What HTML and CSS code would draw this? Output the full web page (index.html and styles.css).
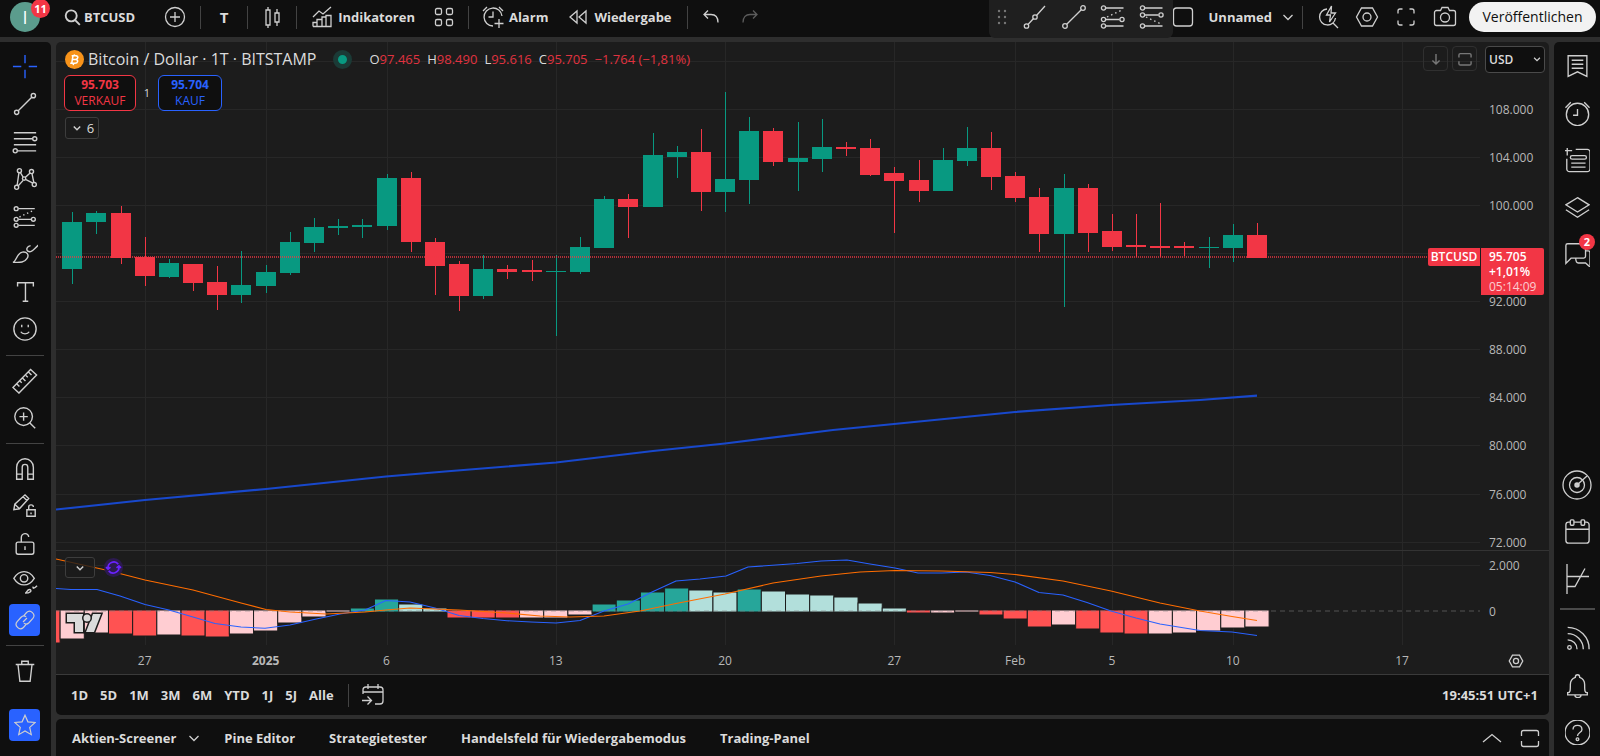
FILE: index.html
```html
<!DOCTYPE html>
<html lang="de">
<head>
<meta charset="utf-8">
<title>BTCUSD</title>
<link rel="stylesheet" href="styles.css">
</head>
<body>
<svg class="sprite" aria-hidden="true">
  <symbol id="search" viewBox="0 0 28 28"><circle cx="13" cy="12.500" r="7"/><path d="M18 18l6 6"/></symbol>
  <symbol id="plus" viewBox="0 0 28 28"><circle cx="14" cy="14" r="9.500"/><path d="M14 9v10M9 14h10"/></symbol>
  <symbol id="candles" viewBox="0 0 28 28"><path d="M8 7h4v15H8zM10 4v3m0 15v3M17 10h4v9h-4zM19 6v4m0 9v4"/></symbol>
  <symbol id="indicators" viewBox="0 0 28 28"><path d="M5 14l6-6 4 3 8-7M5 23.500v-4h4v4m0 0v-7h5v7m0 0V14h4v9.500m0 0v-11h5v11H5"/></symbol>
  <symbol id="grid" viewBox="0 0 28 28"><rect x="5.500" y="5.500" width="6" height="6" rx="1.500"/><rect x="16.500" y="5.500" width="6" height="6" rx="1.500"/><rect x="5.500" y="16.500" width="6" height="6" rx="1.500"/><rect x="16.500" y="16.500" width="6" height="6" rx="1.500"/></symbol>
  <symbol id="alarm-add" viewBox="0 0 28 28"><path d="M23 13a9 9 0 1 0-9 10M14 8.500V14H9.500M4 8l4-4M20 4l4 4M20 16v9M15.500 20.500h9"/></symbol>
  <symbol id="rewind" viewBox="0 0 28 28"><path d="M13 8v12l-7-6zM22 8v12l-7-6z"/></symbol>
  <symbol id="undo" viewBox="0 0 28 28"><path d="M11 7.500l-4 4 4 4M7 11.500h7c4 0 7 2.500 7 8"/></symbol>
  <symbol id="redo" viewBox="0 0 28 28"><path d="M17 7.500l4 4-4 4M21 11.500h-7c-4 0-7 2.500-7 8"/></symbol>
  <symbol id="drag" viewBox="0 0 28 28"><g class="solid"><circle cx="11" cy="8" r="1.200"/><circle cx="17" cy="8" r="1.200"/><circle cx="11" cy="14" r="1.200"/><circle cx="17" cy="14" r="1.200"/><circle cx="11" cy="20" r="1.200"/><circle cx="17" cy="20" r="1.200"/></g></symbol>
  <symbol id="ray" viewBox="0 0 28 28"><circle cx="5.500" cy="23" r="2.200"/><circle cx="14" cy="14" r="2.200"/><path d="M7 21.500l5.500-6M15.500 12.500L24 3"/></symbol>
  <symbol id="trend" viewBox="0 0 28 28"><circle cx="5" cy="23" r="2.300"/><circle cx="23" cy="5" r="2.300"/><path d="M6.700 21.300L21.300 6.700"/></symbol>
  <symbol id="fib" viewBox="0 0 28 28"><circle cx="4.500" cy="5" r="2.100"/><circle cx="4.500" cy="16.500" r="2.100"/><circle cx="23" cy="16.500" r="2.100"/><circle cx="4.500" cy="23" r="2.100"/><path d="M7 5h17.500M7 16.500h13.500M7 23h17.500"/><path d="M8 14l15-7" stroke-dasharray="1.500 3"/></symbol>
  <symbol id="fib-ext" viewBox="0 0 28 28"><circle cx="4.500" cy="5" r="2.100"/><circle cx="4.500" cy="12" r="2.100"/><circle cx="23" cy="12" r="2.100"/><circle cx="4.500" cy="23" r="2.100"/><path d="M7 5h17.500M7 12h13.500M7 23h17.500"/><path d="M8 14l15 7" stroke-dasharray="1.500 3"/></symbol>
  <symbol id="square" viewBox="0 0 28 28"><rect x="4.500" y="5" width="19" height="18" rx="3"/></symbol>
  <symbol id="chev" viewBox="0 0 28 28"><path d="M9.500 12l4.500 4.500 4.500-4.500"/></symbol>
  <symbol id="chev-up" viewBox="0 0 28 28"><path d="M5 18l9-7.500 9 7.500"/></symbol>
  <symbol id="quick" viewBox="0 0 28 28"><path d="M13 6a8 8 0 1 0 8.500 9M19 20l5 5M17.500 3l-5 9h4l-1 7 6-9h-4.500z"/></symbol>
  <symbol id="hex" viewBox="0 0 28 28"><path d="M8.500 5h11l5 9-5 9h-11l-5-9z"/><circle cx="14" cy="14" r="4"/></symbol>
  <symbol id="full" viewBox="0 0 28 28"><path d="M6 10.500V8a2 2 0 0 1 2-2h2.500M17.500 6H20a2 2 0 0 1 2 2v2.500M22 17.500V20a2 2 0 0 1-2 2h-2.500M10.500 22H8a2 2 0 0 1-2-2v-2.500"/></symbol>
  <symbol id="camera" viewBox="0 0 28 28"><path d="M3.500 9.500a2 2 0 0 1 2-2h4l1.500-3h6l1.500 3h4a2 2 0 0 1 2 2v11a2 2 0 0 1-2 2h-17a2 2 0 0 1-2-2z"/><circle cx="14" cy="14.500" r="4.500"/></symbol>
  <symbol id="cross" viewBox="0 0 28 28"><path d="M14 1v9M14 17v9M1 13.500h9M18 13.500h9"/></symbol>
  <symbol id="hlines" viewBox="0 0 28 28"><path d="M2 4h24M2 10.500h20M2 17h24M6 23.500h20"/><circle cx="24.500" cy="10.500" r="2.200"/><circle cx="3.500" cy="23.500" r="2.200"/></symbol>
  <symbol id="pattern" viewBox="0 0 28 28"><circle cx="8" cy="5" r="2.200"/><circle cx="21" cy="6" r="2.200"/><circle cx="5" cy="23" r="2.200"/><circle cx="24" cy="20" r="2.200"/><circle cx="13" cy="13.500" r="1.800"/><path d="M7.500 7L5.500 21M9 7l3 5M14.500 12l5-4.500M21.500 8l2 10M6.500 21.500l5.500-6M14.500 14.500l8 4"/></symbol>
  <symbol id="brush" viewBox="0 0 28 28"><path d="M1 23c4-1 4-10 10-11 5-1 8 3 5 7-3 5-9 4-15 4zM20 5c-4 1-5 4-3 6 4 2 5-1 12-7"/></symbol>
  <symbol id="text" viewBox="0 0 28 28"><path d="M6 8V4h17v4M14.500 4v20M11.500 24h6"/></symbol>
  <symbol id="smile" viewBox="0 0 28 28"><circle cx="14" cy="14" r="12"/><path d="M9.500 17c1.500 3 7.500 3 9 0M10.500 9.500v2.500M17.500 9.500v2.500"/></symbol>
  <symbol id="ruler" viewBox="0 0 28 28"><path d="M1 21L20 1.500l6.500 6L7.500 27zM5 17l3 3M8.500 14l2 2M11.500 11l3 3M15 8l2 2M18 4.500l3 3"/></symbol>
  <symbol id="zoom" viewBox="0 0 28 28"><circle cx="12.500" cy="12.500" r="9.500"/><path d="M19 19l6 6M12.500 8v9M8 12.500h9"/></symbol>
  <symbol id="magnet" viewBox="0 0 28 28"><path d="M5 25V12a9 9 0 0 1 18 0v13h-6V12a3 3 0 0 0-6 0v13zM5 19.500h6M17 19.500h6"/></symbol>
  <symbol id="pencil-lock" viewBox="0 0 28 28"><path d="M2 18l1-6L14 2l4 4L8 17zM3 12l5 5M12 4l4 4M16 18h9v7h-9zM18 18v-3c0-3 5-3 5 0M20.500 21v2"/></symbol>
  <symbol id="lock" viewBox="0 0 28 28"><rect x="4.500" y="12" width="19" height="13" rx="2"/><path d="M10 12V7.500c0-6 8-6 8-1M14 16.500v4"/></symbol>
  <symbol id="eye" viewBox="0 0 28 28"><path d="M2 10c6-9.500 16-9.500 22 0-6 9.500-16 9.500-22 0z"/><circle cx="13" cy="10" r="4"/><path d="M14 26c2 0 2-4 5-4 3 1 1 4-5 4zM23 19c-1 2 0 3 4-1"/></symbol>
  <symbol id="link" viewBox="0 0 28 28"><path d="M12 9l4-4.500a5.500 5.500 0 0 1 8 7.500L19 17.500a5 5 0 0 1-6.500.500M16 19l-4 4.500a5.500 5.500 0 0 1-8-7.500L9 10.500a5 5 0 0 1 6.500-.500M11.500 16.500l5-5"/></symbol>
  <symbol id="trash" viewBox="0 0 28 28"><path d="M4 7h20M6.500 7.500l2 17.500h11l2-17.500M10.500 7V3.500h7V7"/></symbol>
  <symbol id="star" viewBox="0 0 28 28"><path d="M14 1.500l3.700 8.500 9.300.800-7 6.200 2 9.300-8-4.800-8 4.800 2-9.300-7-6.200 9.300-.800z"/></symbol>
  <symbol id="bookmark" viewBox="0 0 28 28"><path d="M3.500 2h21v23L14 20 3.500 25zM7.500 7h13M7.500 11.500h13M7.500 16h13"/></symbol>
  <symbol id="alarm" viewBox="0 0 28 28"><circle cx="14" cy="15" r="12.500"/><path d="M14 9v7H9M.500 7.500l6-6M21.500 1.500l6 6"/></symbol>
  <symbol id="list-add" viewBox="0 0 28 28"><path d="M12 1.500h13a3 3 0 0 1 3 3v19a3 3 0 0 1-3 3H5a3 3 0 0 1-3-3V12M2.500-2.500v11M-3 3h11M7 17h16M7 21.500h16"/><rect x="6" y="8.500" width="18" height="4" rx="2"/></symbol>
  <symbol id="layers" viewBox="0 0 28 28"><path d="M14 3l13 8-13 8-13-8zM1 16.500L14 25l13-8.500"/></symbol>
  <symbol id="chat" viewBox="0 0 28 28"><path d="M7 18l-6 6V4a2 2 0 0 1 2-2h18a2 2 0 0 1 2 2v12a2 2 0 0 1-2 2zM23 10h3a2 2 0 0 1 2 2v16l-5-4.500h-8c-2 0-3-1-3-5.500"/></symbol>
  <symbol id="target" viewBox="-1 -1 30 30"><circle cx="14" cy="14" r="14"/><circle cx="14" cy="14" r="7.500"/><circle cx="14" cy="14" r="1.500" stroke-width="2.500"/><path d="M14 14L24 5"/></symbol>
  <symbol id="calendar" viewBox="0 0 28 28"><path d="M6 3.500H4a3 3 0 0 0-3 3V24a3 3 0 0 0 3 3h20a3 3 0 0 0 3-3V6.500a3 3 0 0 0-3-3h-2M10 3.500h8M1 11.500h26"/><rect x="6" y="1" width="4" height="6" rx="1"/><rect x="18" y="1" width="4" height="6" rx="1"/></symbol>
  <symbol id="options" viewBox="0 0 30 30"><path d="M5 0v30M5 12.500h22M5 22.500h8l10-18"/></symbol>
  <symbol id="rss" viewBox="0 0 28 28"><path d="M3 1.500a24 24 0 0 1 24 24.500M3 8.500a17.500 17.500 0 0 1 17.500 17.500M3 15.500a10.500 10.500 0 0 1 10.500 10.500"/><circle cx="5" cy="24" r="2"/></symbol>
  <symbol id="bell" viewBox="0 0 28 28"><path d="M3 22c3 0 3-2 3-9 0-5 3-7 5.500-8 0-4 5-4 5 0C19 6 22 8 22 13c0 7 0 9 3 9v2.500H3zM11 24.500c0 4 7 4 7 0"/></symbol>
  <symbol id="help" viewBox="0 0 28 28"><circle cx="14" cy="14" r="14"/><path d="M9 10.500c0-6 10-6 10 0 0 4-5 3-5 7.500"/><circle cx="14" cy="21.500" r="1.500"/></symbol>
  <symbol id="goto" viewBox="0 0 28 28"><path d="M4 13V9a3 3 0 0 1 3-3h14a3 3 0 0 1 3 3v11a3 3 0 0 1-3 3h-5M4 11h20M9 3v5M19 3v5M3 19.500h9M8.500 15.500l4 4-4 4"/></symbol>
  <symbol id="panel" viewBox="0 0 28 28"><path d="M5.500 12V8.500a2 2 0 0 1 2-2h13a2 2 0 0 1 2 2V12M5.500 17v3.500a2 2 0 0 0 2 2h13a2 2 0 0 0 2-2V17"/></symbol>
  <symbol id="down" viewBox="0 0 28 28"><path d="M14 7v14M9 16l5 5 5-5"/></symbol>
  <symbol id="refresh" viewBox="0 0 28 28"><path d="M6 15.500a8.500 8.500 0 0 1 15-6.500M22 12.500a8.500 8.500 0 0 1-15 6.500M3 13.500l3 3 3.500-3M25 14.500l-3-3-3.500 3"/></symbol>
</svg>

<header class="topbar">
  <button class="avatar" aria-label="Profil">I<span class="badge">11</span></button>
  <button class="tb symbol-search"><svg class="ic ic-s bold"><use href="#search"/></svg>BTCUSD</button>
  <button class="tb tb-add" aria-label="Vergleichen"><svg class="ic"><use href="#plus"/></svg></button>
  <i class="vr"></i>
  <button class="tb tb-46 tb-interval">T</button>
  <i class="vr"></i>
  <button class="tb tb-48" aria-label="Kerzen"><svg class="ic"><use href="#candles"/></svg></button>
  <i class="vr"></i>
  <button class="tb tb-ind"><svg class="ic"><use href="#indicators"/></svg>Indikatoren</button>
  <button class="tb tb-grid" aria-label="Vorlagen"><svg class="ic"><use href="#grid"/></svg></button>
  <i class="vr"></i>
  <button class="tb tb-alarm"><svg class="ic"><use href="#alarm-add"/></svg>Alarm</button>
  <button class="tb tb-replay"><svg class="ic"><use href="#rewind"/></svg>Wiedergabe</button>
  <i class="vr"></i>
  <button class="tb tb-46" aria-label="Rückgängig"><svg class="ic"><use href="#undo"/></svg></button>
  <button class="tb tb-30 dim" aria-label="Wiederholen"><svg class="ic"><use href="#redo"/></svg></button>
  <div class="topbar-right">
    <button class="tb tb-30" aria-label="Layout"><svg class="ic"><use href="#square"/></svg></button>
    <button class="tb tb-name">Unnamed<svg class="ic"><use href="#chev"/></svg></button>
    <i class="vr"></i>
    <button class="tb tb-icon" aria-label="Schnellsuche"><svg class="ic"><use href="#quick"/></svg></button>
    <button class="tb tb-icon" aria-label="Einstellungen"><svg class="ic"><use href="#hex"/></svg></button>
    <button class="tb tb-icon" aria-label="Vollbild"><svg class="ic"><use href="#full"/></svg></button>
    <button class="tb tb-icon" aria-label="Schnappschuss"><svg class="ic"><use href="#camera"/></svg></button>
    <button class="publish">Veröffentlichen</button>
  </div>
  <div class="floating">
    <button class="fl fl-drag" aria-label="Verschieben"><svg class="ic"><use href="#drag"/></svg></button>
    <button class="fl" aria-label="Strahl"><svg class="ic"><use href="#ray"/></svg></button>
    <button class="fl" aria-label="Trendlinie"><svg class="ic"><use href="#trend"/></svg></button>
    <button class="fl" aria-label="Fibonacci"><svg class="ic"><use href="#fib"/></svg></button>
    <button class="fl" aria-label="Fibonacci-Erweiterung"><svg class="ic"><use href="#fib-ext"/></svg></button>
  </div>
</header>

<div class="workspace">
  <nav class="tools">
    <div class="tool-group tool-group-draw">
      <button class="tool accent" aria-label="Fadenkreuz"><svg class="ic"><use href="#cross"/></svg></button>
      <button class="tool" aria-label="Trendlinie"><svg class="ic"><use href="#trend"/></svg></button>
      <button class="tool" aria-label="Linien"><svg class="ic"><use href="#hlines"/></svg></button>
      <button class="tool" aria-label="Muster"><svg class="ic"><use href="#pattern"/></svg></button>
      <button class="tool" aria-label="Prognose"><svg class="ic"><use href="#fib"/></svg></button>
      <button class="tool" aria-label="Pinsel"><svg class="ic"><use href="#brush"/></svg></button>
      <button class="tool" aria-label="Text"><svg class="ic"><use href="#text"/></svg></button>
      <button class="tool" aria-label="Symbole"><svg class="ic"><use href="#smile"/></svg></button>
    </div>
    <hr>
    <div class="tool-group">
      <button class="tool" aria-label="Messen"><svg class="ic"><use href="#ruler"/></svg></button>
      <button class="tool" aria-label="Vergrößern"><svg class="ic"><use href="#zoom"/></svg></button>
    </div>
    <hr>
    <div class="tool-group tool-group-edit">
      <button class="tool" aria-label="Magnet"><svg class="ic"><use href="#magnet"/></svg></button>
      <button class="tool" aria-label="Zeichenmodus"><svg class="ic"><use href="#pencil-lock"/></svg></button>
      <button class="tool" aria-label="Sperren"><svg class="ic"><use href="#lock"/></svg></button>
      <button class="tool" aria-label="Ausblenden"><svg class="ic"><use href="#eye"/></svg></button>
      <button class="tool active" aria-label="Verknüpfen"><svg class="ic"><use href="#link"/></svg></button>
    </div>
    <hr>
    <button class="tool" aria-label="Löschen"><svg class="ic"><use href="#trash"/></svg></button>
    <button class="tool active tool-last" aria-label="Favoriten"><svg class="ic"><use href="#star"/></svg></button>
  </nav>

  <main class="center">
    <section class="chart-card">
      <div class="chart">
        <svg class="plot" id="plot" role="img" aria-label="BTCUSD Kerzendiagramm"></svg>
        <div class="legend">
          <div class="legend-title">
            <svg class="coin" viewBox="0 0 20 20"><circle cx="10" cy="10" r="10" fill="#f7931a"/><path d="M8.500 5.500L7 14.500M7 6h4.500c3 .500 2.500 3.500-.500 4M7 10h4.500c3 .500 2 4-1 4H5.500M10 4.500l-.300 1.500M9 14l-.300 1.800" fill="none" stroke="#fff" stroke-width="1.600"/></svg>
            <h1>Bitcoin / Dollar · 1T · BITSTAMP</h1>
            <i class="status"></i>
            <p class="ohlc"><span>O<b>97.465</b></span><span>H<b>98.490</b></span><span>L<b>95.616</b></span><span>C<b>95.705</b></span><b>−1.764 (−1,81%)</b></p>
          </div>
          <div class="trade">
            <button class="quote sell"><strong>95.703</strong>VERKAUF</button>
            <span class="spread">1</span>
            <button class="quote buy"><strong>95.704</strong>KAUF</button>
          </div>
          <button class="collapse"><svg class="ic ic-c"><use href="#chev"/></svg>6</button>
        </div>
        <div class="axis-tools">
          <button class="mini" aria-label="Nach unten"><svg class="ic ic-c"><use href="#down"/></svg></button>
          <button class="mini" aria-label="Maximieren"><svg class="ic ic-c"><use href="#panel"/></svg></button>
          <div class="currency"><select aria-label="Währung"><option>USD</option></select><svg class="ic ic-c"><use href="#chev"/></svg></div>
        </div>
        <div class="price-tag" id="price-tag">
          <span class="tag-symbol">BTCUSD</span>
          <span class="tag-value"><strong>95.705</strong><strong>+1,01%</strong><span>05:14:09</span></span>
        </div>
        <div class="pane-tools">
          <button class="collapse collapse-pane" aria-label="Legende"><svg class="ic ic-c"><use href="#chev"/></svg></button>
          <svg class="ic refresh"><use href="#refresh"/></svg>
        </div>
        <button class="axis-settings" aria-label="Achse"><svg class="ic"><use href="#hex"/></svg></button>
        <svg class="brand" viewBox="0 0 36 20"><path d="M1 1h16v18H9V9H1zM27 1h8l-7 18h-8z"/><circle cx="21" cy="5" r="3.500"/></svg>
      </div>
      <div class="ranges">
        <button>1D</button><button>5D</button><button>1M</button><button>3M</button><button>6M</button><button>YTD</button><button>1J</button><button>5J</button><button>Alle</button>
        <i class="vr"></i>
        <button class="goto" aria-label="Gehe zu"><svg class="ic"><use href="#goto"/></svg></button>
        <time>19:45:51 UTC+1</time>
      </div>
    </section>
    <footer class="panels">
      <button>Aktien-Screener<svg class="ic"><use href="#chev"/></svg></button>
      <button>Pine Editor</button>
      <button>Strategietester</button>
      <button>Handelsfeld für Wiedergabemodus</button>
      <button>Trading-Panel</button>
      <div class="panels-right">
        <button aria-label="Öffnen"><svg class="ic"><use href="#chev-up"/></svg></button>
        <button aria-label="Maximieren"><svg class="ic"><use href="#panel"/></svg></button>
      </div>
    </footer>
  </main>

  <nav class="widgets">
    <button aria-label="Watchlist"><svg class="ic"><use href="#bookmark"/></svg></button>
    <button aria-label="Alarme"><svg class="ic"><use href="#alarm"/></svg></button>
    <button aria-label="Liste"><svg class="ic"><use href="#list-add"/></svg></button>
    <button aria-label="Objektbaum"><svg class="ic"><use href="#layers"/></svg></button>
    <button aria-label="Chats"><svg class="ic"><use href="#chat"/></svg><span class="badge badge-s">2</span></button>
    <button class="push" aria-label="Screener"><svg class="ic ic-t"><use href="#target"/></svg></button>
    <button aria-label="Kalender"><svg class="ic"><use href="#calendar"/></svg></button>
    <button aria-label="Optionen"><svg class="ic ic-t"><use href="#options"/></svg></button>
    <hr>
    <button aria-label="News"><svg class="ic"><use href="#rss"/></svg></button>
    <button aria-label="Meldungen"><svg class="ic"><use href="#bell"/></svg></button>
    <button aria-label="Hilfe"><svg class="ic"><use href="#help"/></svg></button>
  </nav>
</div>
<script src="chart.js"></script>
</body>
</html>
```
FILE: styles.css
```css
* { box-sizing: border-box; }
html, body { height: 100%; }
body {
  margin: 0;
  display: flex;
  flex-direction: column;
  gap: 5px;
  background: #2e2e2e;
  color: #dbdbdb;
  font: 12px/16px "Open Sans", "Noto Sans", sans-serif;
  overflow: hidden;
}
button, select { font: inherit; color: inherit; background: none; border: 0; padding: 0; margin: 0; }
.sprite { position: absolute; width: 0; height: 0; }
.ic { width: 28px; height: 28px; flex: none; fill: none; stroke: #cfcfcf; stroke-width: 1.3; overflow: visible; }
.solid { fill: #777; stroke: none; }
.ic-s { width: 22px; height: 22px; }
.ic-c { width: 20px; height: 20px; stroke-width: 2; }
.ic-t { width: 30px; height: 30px; }
.bold { stroke-width: 2.4; }

.topbar { position: relative; flex: none; display: flex; align-items: center; height: 37px; padding: 0 4px 3px 10px; background: #0f0f0f; }
.avatar { position: relative; width: 30px; height: 30px; border-radius: 50%; background: #5b9c8d; color: #fff; font-size: 18px; }
.badge { position: absolute; left: 21px; top: -3px; width: 19px; height: 19px; border-radius: 50%; background: #f23645; color: #fff; font: 700 11px/19px "Open Sans", sans-serif; text-align: center; }
.tb { display: flex; align-items: center; justify-content: center; height: 34px; font-weight: 700; font-size: 13px; white-space: nowrap; }
.symbol-search { margin-left: 21px; gap: 1px; }
.tb-add { width: 50px; margin-left: 15px; }
.tb-interval { font-size: 15px; }
.vr { flex: none; width: 1px; height: 23px; background: #434343; }
.tb-46 { width: 46px; }
.tb-48 { width: 48px; }
.tb-30 { width: 32px; }
.tb-ind { padding: 0 12px 0 11px; gap: 2px; }
.tb-grid { width: 34px; margin-right: 7px; }
.tb-alarm { padding: 0 8px 0 10px; gap: 2px; }
.tb-replay { padding: 0 15px 0 8px; gap: 2px; }
.dim { opacity: .4; }
.topbar-right { display: flex; align-items: center; margin-left: auto; }
.tb-name { margin-left: 10px; gap: 2px; }
.tb-icon { width: 39px; }
.tb-name + .vr { margin-right: 5px; }
.publish { width: 127px; height: 30px; margin-left: 5px; border-radius: 15px; background: #f2f2f2; color: #0f0f0f; font-size: 14px; font-weight: 500; white-space: nowrap; }
.floating { position: absolute; right: 427px; top: 0; display: flex; align-items: center; height: 38px; padding: 0 2px 4px 0; border-radius: 0 0 6px 6px; background: #1f1f1f; }
.fl { display: flex; align-items: center; justify-content: center; width: 39px; height: 34px; }
.fl-drag { width: 26px; }

.workspace { flex: 1; display: flex; gap: 5px; min-height: 0; }
.tools { flex: none; display: flex; flex-direction: column; width: 51px; padding: 6px 2px 13px 0; background: #0f0f0f; border-radius: 0 5px 0 0; }
.tools hr { width: 38px; height: 1px; margin: 7px 0 6px 6px; border: 0; background: #434343; flex: none; }
.tool-group { display: flex; flex-direction: column; justify-content: space-between; }
.tool-group-draw { height: 300px; }
.tool-group-edit { height: 188px; }
.tool { display: flex; align-items: center; justify-content: center; height: 37px; flex: none; }
.tool .ic { width: 26px; height: 26px; stroke-width: 1.5; }
.accent .ic { stroke: #2962ff; }
.active { align-self: center; width: 31px; height: 32px; margin: 3px 0 2px; border-radius: 4px; background: #2962ff; }
.active .ic { width: 22px; height: 22px; }
.tool-last { margin-top: auto; }

.center { flex: 1; display: flex; flex-direction: column; gap: 4px; min-width: 0; }
.chart-card { flex: 1; display: flex; flex-direction: column; min-height: 0; border-radius: 5px; overflow: hidden; }
.chart { position: relative; flex: 1; min-height: 0; background: #1c1c1c; border-bottom: 1px solid #3a3a3a; }
.plot { position: absolute; inset: 0; width: 100%; height: 100%; }
.axis-label { font-size: 12px; font-weight: 500; fill: #b8b8b8; }
.axis-strong { font-weight: 700; }
.legend { position: relative; padding: 7px 8px; }
.legend-title { display: flex; align-items: center; height: 20px; }
.coin { width: 19px; height: 19px; margin-left: 1px; }
.legend h1 { margin: 0 0 0 4px; font-size: 16px; line-height: 20px; font-weight: 500; white-space: nowrap; }
.status { width: 19px; height: 19px; margin: 0 17px; border: 5px solid #1b3a36; border-radius: 50%; background: #089981; }
.ohlc { display: flex; gap: 7px; margin: 0; font-size: 13px; font-weight: 500; white-space: nowrap; }
.ohlc b { font-weight: 500; color: #e03340; }
.trade { display: flex; align-items: center; margin-top: 6px; }
.quote { height: 36px; border: 1px solid; border-radius: 6px; background: #0f0f0f; font-size: 12px; line-height: 16px; }
.quote strong { display: block; font-size: 12px; }
.sell { width: 72px; color: #f23645; }
.buy { width: 64px; color: #2962ff; }
.spread { width: 22px; text-align: center; font-size: 11px; }
.collapse { display: flex; align-items: center; justify-content: center; width: 34px; height: 22px; margin: 6px 0 0 1px; padding-right: 3px; border: 1px solid #3d3d3d; border-radius: 3px; background: #1c1c1ccc; font-size: 13px; }
.axis-tools { position: absolute; right: 4px; top: 4px; display: flex; gap: 4px; }
.mini { display: flex; align-items: center; justify-content: center; width: 25px; height: 25px; border: 1px solid #303030; border-radius: 4px; }
.mini .ic { stroke: #777; }
.currency { position: relative; margin-left: 4px; }
.currency select { width: 60px; height: 27px; padding: 0 3px; appearance: none; border: 1px solid #4a4a4a; border-radius: 4px; background: #0f0f0f; font-size: 12px; font-weight: 600; }
.currency .ic { position: absolute; right: -1px; top: 4px; width: 18px; height: 18px; pointer-events: none; }
.price-tag { position: absolute; right: 5px; display: flex; align-items: flex-start; color: #fff; font-size: 12px; }
.tag-symbol { width: 52px; padding: 1px 0; text-align: center; font-weight: 600; background: #f23645; border-radius: 2px 0 0 2px; }
.tag-value { display: flex; flex-direction: column; width: 63px; height: 47px; padding: 1px 0 0 8px; margin-left: 1px; line-height: 15px; background: #f23645; border-radius: 0 2px 2px 0; }
.tag-value strong { font-weight: 600; }
.tag-value span { opacity: .75; }
.pane-tools { position: absolute; left: 8px; bottom: 96px; display: flex; align-items: center; gap: 9px; }
.collapse-pane { width: 30px; height: 21px; margin-top: 0; padding-right: 0; }
.refresh { width: 19px; height: 19px; border-radius: 50%; background: #2c1a4f; stroke: #6a22ff; stroke-width: 2.5; }
.axis-settings { position: absolute; right: 24px; bottom: 4px; height: 18px; }
.axis-settings .ic { width: 18px; height: 18px; stroke-width: 2; }
.brand { position: absolute; left: 10px; bottom: 41px; width: 36px; height: 20px; fill: #dbdbdb; stroke: #1c1c1c; stroke-width: 3; paint-order: stroke; overflow: visible; }
.ranges { display: flex; align-items: center; gap: 12px; flex: none; height: 40px; padding: 0 11px 0 15px; background: #0f0f0f; font-size: 13px; font-weight: 700; }
.ranges .vr { margin-left: 2px; }
.goto { height: 28px; margin-left: -2px; }
.ranges time { margin-left: auto; }
.panels { flex: none; display: flex; align-items: center; gap: 34px; height: 37px; padding: 0 5px 0 16px; background: #0f0f0f; border-radius: 5px 5px 0 0; font-size: 13px; font-weight: 700; }
.panels button { display: flex; align-items: center; white-space: nowrap; }
.panels > button:first-child { gap: 4px; margin-right: -18px; }
.panels-right { display: flex; gap: 10px; margin-left: auto; }

.widgets { flex: none; display: flex; flex-direction: column; width: 46px; padding-top: 1px; background: #0f0f0f; border-radius: 5px 0 0 0; }
.widgets button { position: relative; display: flex; align-items: center; justify-content: center; height: 47px; flex: none; }
.widgets .ic { width: 25px; height: 25px; stroke-width: 1.5; }
.widgets .ic-t { width: 30px; height: 30px; stroke-width: 1.3; }
.widgets hr { width: 35px; height: 2px; margin: 6px 0 5px 6px; border: 0; background: #4a4a4a; flex: none; }
.push { margin-top: auto; }
.badge-s { left: 25px; top: 3px; width: 16px; height: 16px; line-height: 16px; }
```
FILE: chart.js
```js
// Candles: [high, body top, body bottom, low, rising], measured down from the chart's top edge.
const BASE_W = 1493, BASE_H = 632, STEP = 24.18, FIRST = 16.2;
const candles = [
  [170,180,227,242,1],[169,171,180,192,1],[164,171,216,222,0],[195,215,234,244,0],[217,221,235,236,1],
  [222,222,241,249,0],[224,240,253,268,0],[209,243,253,261,1],[223,230,244,251,1],[190,200,231,233,1],
  [176,185,201,210,1],[177,184,186,193,1],[177,183,185,196,1],[132,136,184,188,1],[130,136,200,210,0],
  [196,200,224,253,0],[219,222,254,269,0],[213,227,254,257,1],[223,227,230,237,0],[218,228,230,239,0],
  [213,229,230,294,1],[195,205,230,232,1],[154,157,206,206,1],[152,157,165,196,0],[91,113,165,165,1],
  [104,110,115,136,1],[87,110,150,169,0],[50,137,150,170,1],[75,89,138,162,1],[86,89,120,124,0],
  [80,116,120,149,1],[77,105,117,130,1],[100,105,107,114,0],[97,106,133,134,0],[125,131,139,191,0],
  [118,138,149,160,0],[106,118,149,149,1],[85,106,119,124,1],[90,106,135,148,0],[130,134,156,160,0],
  [146,155,192,210,0],[132,146,192,265,1],[142,146,191,210,0],[172,189,205,209,0],[172,203,205,215,0],
  [161,204,206,215,0],[200,204,206,214,0],[195,205,206,226,1],[182,193,206,220,1],[181,193,216,216,0]
];
// Histogram: [edge, colour key]; the first bar is one step before the first candle.
const hist = [
  [601,'r'],[597,'p'],[591,'p'],[592,'r'],[594,'r'],[593,'p'],[594,'r'],[595,'r'],[592,'p'],[589,'p'],[581,'p'],[575,'p'],[570,'p'],
  [566,'g'],[557,'g'],[562,'l'],[566,'l'],[576,'r'],[576,'r'],[576,'r'],[576,'p'],[576,'p'],[573,'p'],
  [562,'g'],[558,'g'],[550,'g'],[546,'g'],[548,'l'],[550,'l'],[547,'g'],[549,'l'],[552,'l'],[553,'l'],[555,'l'],[561,'l'],[566,'l'],
  [571,'r'],[571,'p'],[570,'p'],[573,'r'],[577,'r'],[585,'r'],[583,'p'],[587,'r'],[591,'r'],[592,'r'],
  [592,'p'],[591,'p'],[589,'p'],[586,'p'],[585,'p']
];
const fills = { r: '#ff5252', p: '#ffcdd2', g: '#26a69a', l: '#b2dfdb' };
const average = [[0,467.5],[89,458],[210,447],[330,434.5],[389,429.5],[500,420.5],[597,409],[669,401.500],[777,388],[838,382],[959,370],[1055,363],[1144,358],[1201,353.700]];
const macd = [[0,546.5],[15,547.5],[41,547.5],[64,554],[89,562.5],[113,568],[137,575],[159,581.5],[185,585],[209,586.3],[234,583],[258,577.5],[284,572],[309,568],[330,558.500],[354,560],[379,566],[403,573.5],[427,576.5],[451,578.7],[475,580],[500,581],[524,578.5],[548,569],[572,562],[596,550],[620,539],[644,537],[670,534],[692,525],[741,521.5],[765,519],[791,518],[814,522],[839,526],[862,531],[886,531],[910,530],[934,533.500],[959,540],[983,550.5],[1007,553],[1031,560.5],[1055,569],[1080,576],[1104,582],[1144,588.500],[1176,590],[1201,593.5]];
const signal = [[0,517],[52,528.5],[89,538],[137,548],[185,561],[210,567.5],[234,570],[270,572],[309,570],[330,568],[354,566],[403,568],[451,571],[484,574],[514,575],[548,574],[584,569],[620,561.5],[669,552],[717,541],[765,534],[804,530],[839,528.5],[886,529],[934,530.5],[959,532.5],[1007,539],[1055,549],[1104,561],[1144,569],[1176,574.5],[1201,578.5]];
const days = [[3,'27'],[8,'2025',true],[13,'6'],[20,'13'],[27,'20'],[34,'27'],[39,'Feb'],[43,'5'],[48,'10'],[55,'17']];
const prices = [[19,''],[67,'108.000'],[115,'104.000'],[163,'100.000'],[211,''],[259,'92.000'],[307,'88.000'],[355,'84.000'],[403,'80.000'],[452,'76.000'],[500,'72.000'],[523,'2.000'],[569,'0']];

function draw() {
  const plot = document.getElementById('plot');
  const W = plot.clientWidth, H = plot.clientHeight;
  const sx = (W - 69) / (BASE_W - 69), sy = H / BASE_H;
  const X = v => v * sx, Y = v => v * sy, bar = i => X(FIRST + STEP * i);
  const right = W - 69, out = [];
  const rect = (x, y, w, h, f, extra = '') => out.push(`<rect x="${x}" y="${y}" width="${w}" height="${h}" fill="${f}" ${extra}/>`);
  const line = (pts, c, w) => out.push(`<polyline points="${pts.map(p => X(p[0]) + ',' + Y(p[1])).join(' ')}" fill="none" stroke="${c}" stroke-width="${w}" stroke-linejoin="round"/>`);

  days.forEach(([i, t, strong]) => {
    rect(Math.round(bar(i)), 0, 1, Y(603), '#272727');
    out.push(`<text class="axis-label ${strong ? 'axis-strong' : ''}" x="${bar(i)}" y="${Y(623)}" text-anchor="middle">${t}</text>`);
  });
  prices.forEach(([y, t]) => {
    if (t !== '0') rect(0, Math.round(Y(y)), right, 1, '#272727');
    out.push(`<text class="axis-label" x="${right + 9}" y="${Y(y) + 5}">${t}</text>`);
  });
  rect(0, Math.round(Y(508)), W, 1, '#333');

  hist.forEach(([edge, key], n) => {
    const up = key === 'g' || key === 'l', z = up ? 570 : 568;
    rect(bar(n - 1) - STEP * sx / 2, Y(Math.min(edge, z)), STEP * sx, Math.max(2, Y(Math.abs(edge - z))), fills[key], 'stroke="#1c1c1c" stroke-width="1"');
  });
  out.push(`<path d="M0 ${Y(569)}H${right}" stroke="#808080" stroke-opacity=".55" stroke-dasharray="5 4"/>`);
  line(macd, '#2962ff', 1.1);
  line(signal, '#ff6d00', 1.1);
  line(average, '#1848cc', 2.2);

  candles.forEach(([hi, top, bot, lo, up], i) => {
    const c = up ? '#089981' : '#f23645';
    rect(Math.round(bar(i)), Y(hi), 1, Y(lo - hi), c);
    rect(Math.round(bar(i) - 10), Y(top), 20, Y(bot - top), c);
  });
  out.push(`<path d="M0 ${Math.round(Y(215))}H${right}" stroke="#f23645" stroke-width="2" stroke-dasharray="1 1" stroke-opacity=".7"/>`);
  plot.innerHTML = out.join('');
  document.getElementById('price-tag').style.top = Y(206) + 'px';
}
draw();
addEventListener('resize', draw);
```
